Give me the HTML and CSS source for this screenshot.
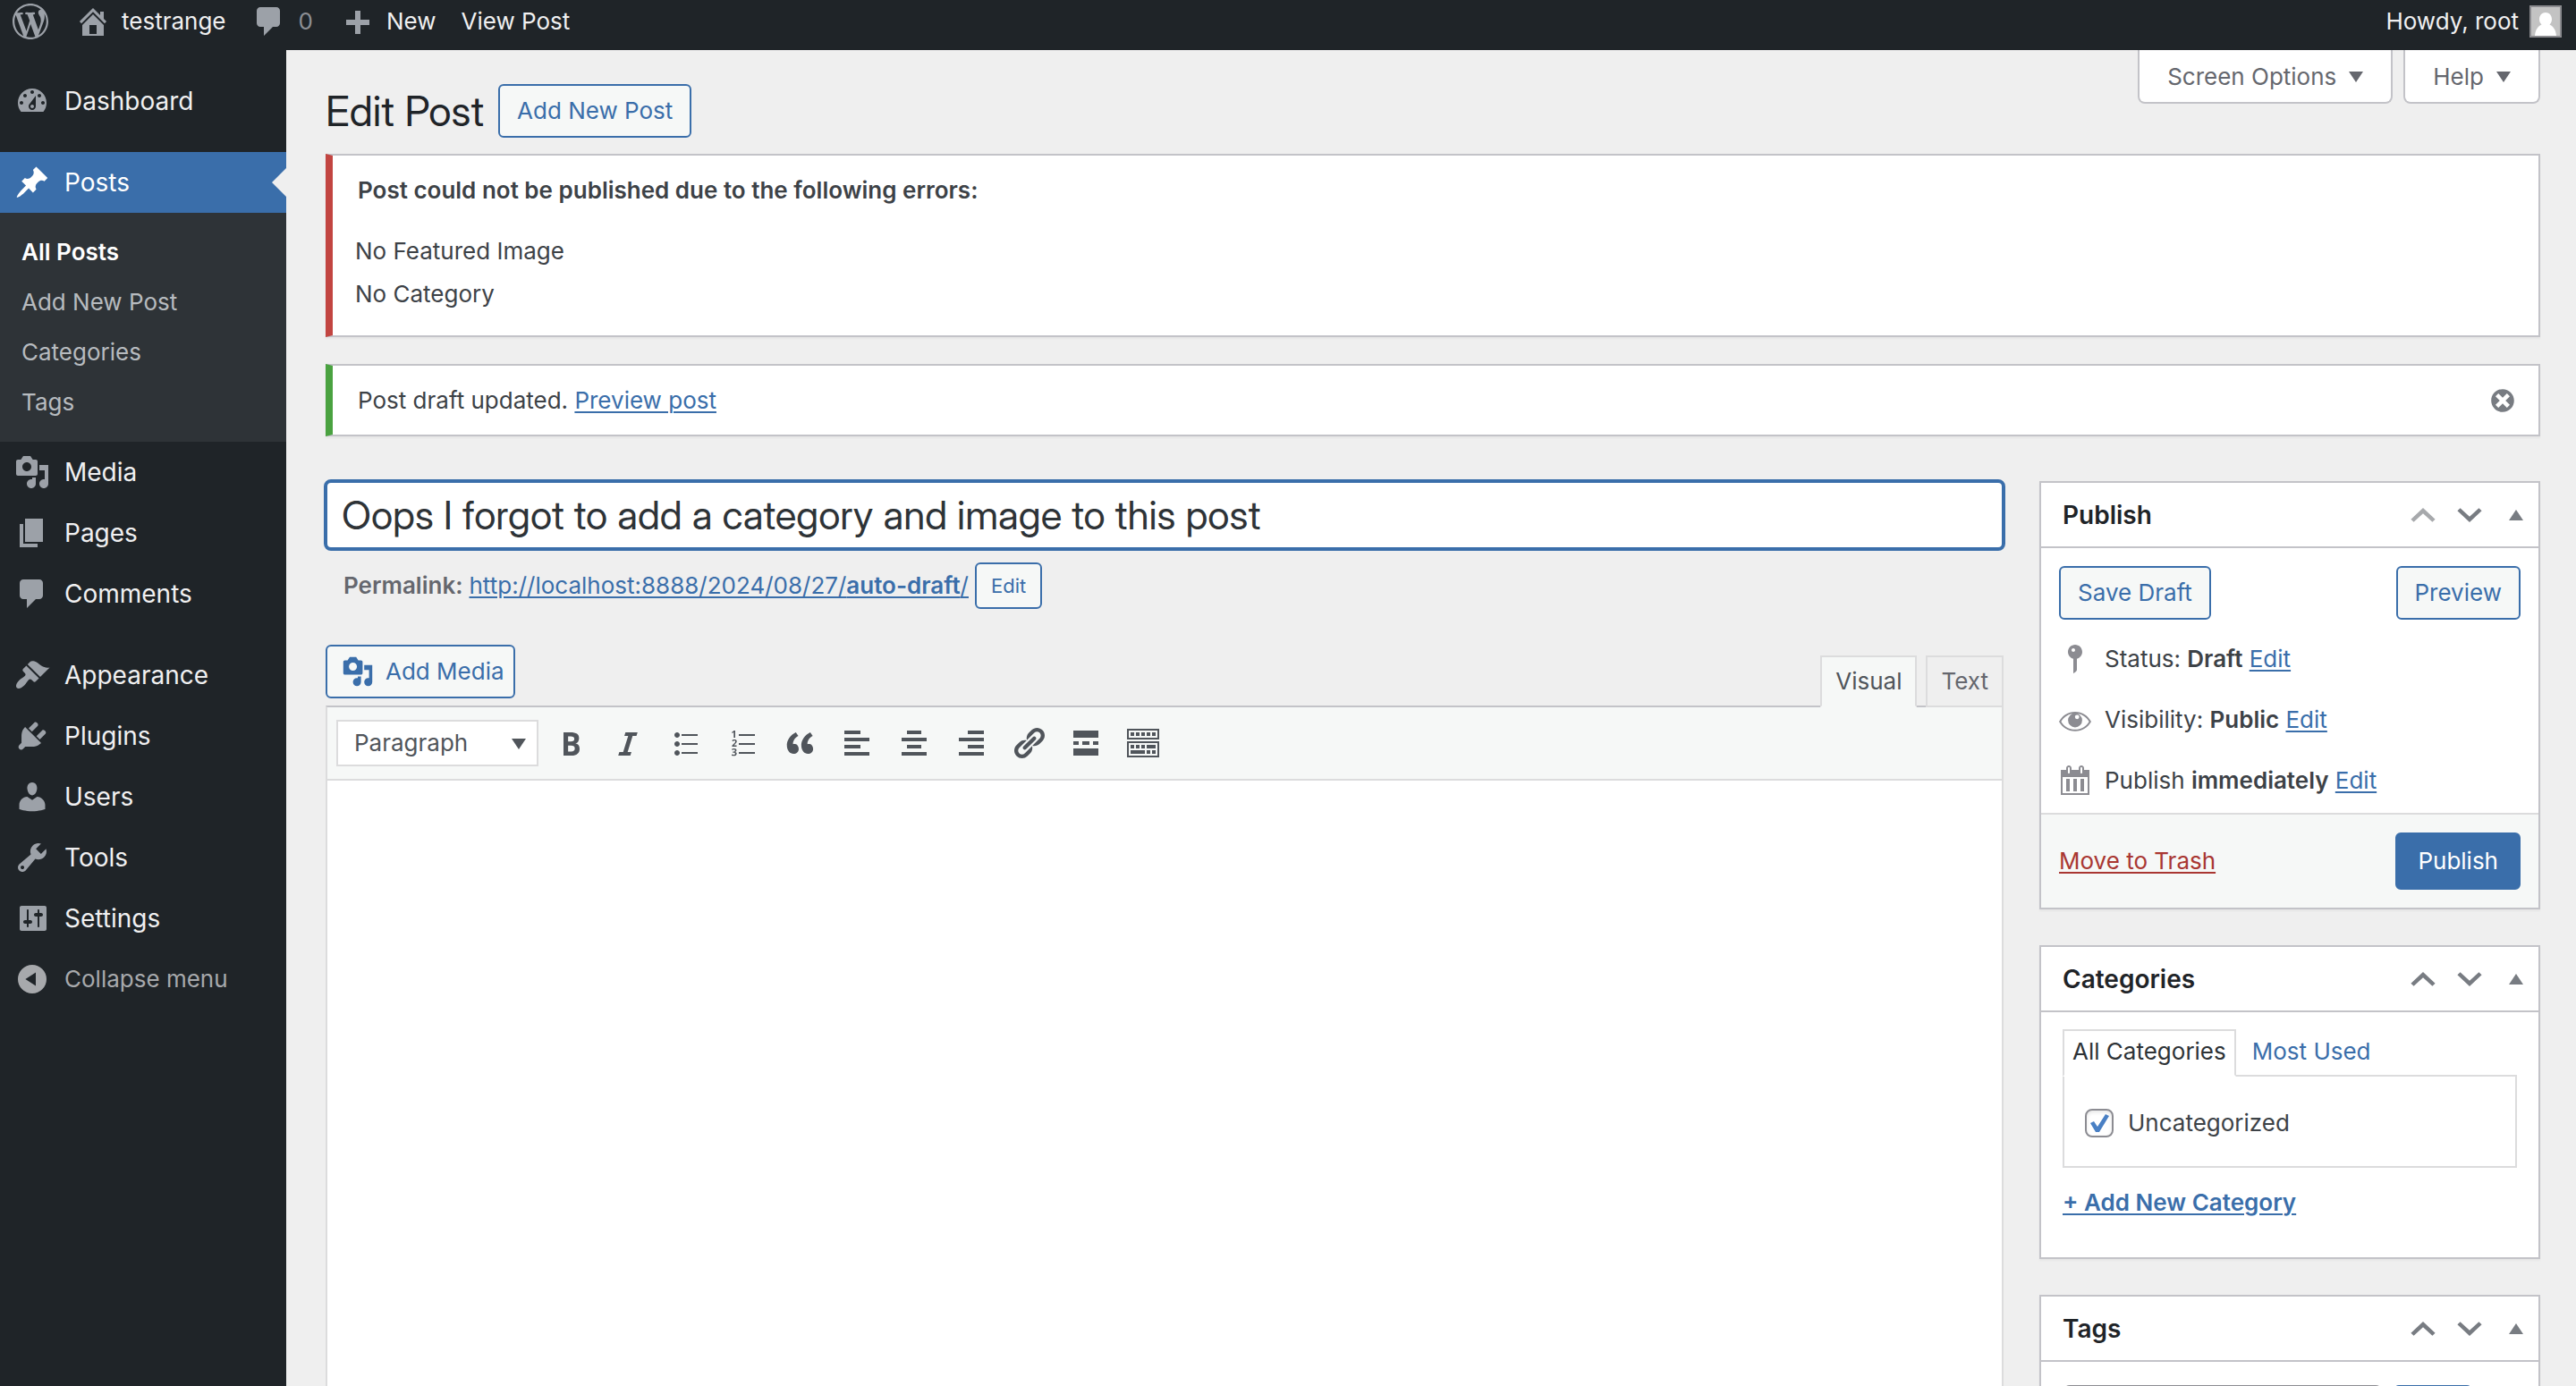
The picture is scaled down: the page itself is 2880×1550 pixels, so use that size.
FILE: index.html
```html
<!DOCTYPE html>
<html lang="en">
<head>
<meta charset="utf-8">
<meta name="viewport" content="width=device-width, initial-scale=1">
<title>Edit Post ‹ testrange — WordPress</title>
<link rel="stylesheet" href="styles.css">
</head>
<body>
<svg class="sprite" aria-hidden="true">
  <symbol id="i-wordpress" viewBox="0 0 20 20"><path d="M20 10c0-5.51-4.49-10-10-10C4.48 0 0 4.49 0 10c0 5.52 4.48 10 10 10 5.51 0 10-4.48 10-10zM7.78 15.37L4.37 6.22c.55-.02 1.17-.08 1.17-.08.5-.06.44-1.13-.06-1.11 0 0-1.45.11-2.37.11-.18 0-.37 0-.58-.01C4.12 2.69 6.87 1.11 10 1.11c2.33 0 4.45.87 6.05 2.34-.68-.11-1.65.39-1.65 1.58 0 .74.45 1.36.9 2.1.35.61.55 1.36.55 2.46 0 1.49-1.4 5-1.4 5l-3.03-8.37c.54-.02.82-.17.82-.17.5-.05.44-1.25-.06-1.22 0 0-1.44.12-2.38.12-.87 0-2.33-.12-2.33-.12-.5-.03-.56 1.2-.06 1.22l.92.08 1.26 3.41zM17.41 10c.24-.64.74-1.87.43-4.25.7 1.29 1.05 2.71 1.05 4.25 0 3.29-1.73 6.24-4.4 7.78.97-2.59 1.94-5.2 2.92-7.78zM6.1 18.09C3.12 16.65 1.11 13.53 1.11 10c0-1.3.23-2.48.72-3.59C3.25 10.3 4.67 14.2 6.1 18.09zm4.03-6.63l2.58 6.98c-.86.29-1.76.45-2.71.45-.79 0-1.57-.11-2.29-.33.81-2.38 1.62-4.74 2.42-7.1z"/></symbol>
  <symbol id="i-home" viewBox="0 0 20 20"><path fill-rule="evenodd" d="M16 8.5l1.53 1.53-1.06 1.06L10 4.6l-6.47 6.49-1.06-1.06L10 2.5l4 4v-2h2v4zm-6-2.46l6 5.99V18H4v-5.97zM12 17v-5H8v5h4z"/></symbol>
  <symbol id="i-comment" viewBox="0 0 20 20"><path d="M5 2h9c1.1 0 2 .9 2 2v7c0 1.1-.9 2-2 2h-2l-5 5v-5H5c-1.1 0-2-.9-2-2V4c0-1.1.9-2 2-2z"/></symbol>
  <symbol id="i-plus" viewBox="0 0 20 20"><path d="M8.5 4h3v5h5v3h-5v5h-3v-5h-5V9h5z"/></symbol>
  <symbol id="i-dashboard" viewBox="0 0 20 20"><path fill-rule="evenodd" d="M3.76 16h12.48c1.1-1.37 1.76-3.11 1.76-5 0-4.42-3.58-8-8-8s-8 3.58-8 8c0 1.89.66 3.63 1.76 5zM10 4c.55 0 1 .45 1 1s-.45 1-1 1-1-.45-1-1 .45-1 1-1zM6 6c.55 0 1 .45 1 1s-.45 1-1 1-1-.45-1-1 .45-1 1-1zm8 0c.55 0 1 .45 1 1s-.45 1-1 1-1-.45-1-1 .45-1 1-1zm-5.37 5.55L12 7v6c0 1.1-.9 2-2 2s-2-.9-2-2c0-.57.24-1.08.63-1.45zM4 10c.55 0 1 .45 1 1s-.45 1-1 1-1-.45-1-1 .45-1 1-1zm12 0c.55 0 1 .45 1 1s-.45 1-1 1-1-.45-1-1 .45-1 1-1zm-5 3c0-.55-.45-1-1-1s-1 .45-1 1 .45 1 1 1 1-.45 1-1z"/></symbol>
  <symbol id="i-pin" viewBox="0 0 20 20"><path d="M10.44 3.02l1.82-1.82 6.36 6.35-1.83 1.82c-1.05-.68-2.48-.57-3.41.36l-.75.75c-.92.93-1.04 2.35-.35 3.41l-1.83 1.82-2.41-2.41-2.8 2.79c-.42.42-3.38 2.71-3.8 2.29s1.86-3.39 2.28-3.81l2.79-2.79L4.1 9.36l1.83-1.82c1.05.69 2.48.57 3.4-.36l.75-.75c.93-.92 1.05-2.35.36-3.41z"/></symbol>
  <symbol id="i-media" viewBox="0 0 20 20"><path fill-rule="evenodd" d="M13 11V4c0-.55-.45-1-1-1h-1.67L9 1H5L3.67 3H2c-.55 0-1 .45-1 1v7c0 .55.45 1 1 1h10c.55 0 1-.45 1-1zM7 4.5c1.38 0 2.5 1.12 2.5 2.5S8.38 9.5 7 9.5 4.5 8.38 4.5 7 5.62 4.5 7 4.5zM14 6h5v10.5c0 1.38-1.12 2.5-2.5 2.5S14 17.88 14 16.5s1.12-2.5 2.5-2.5c.17 0 .34.02.5.05V9h-3V6zm-4 8.05V13h2v3.5c0 1.38-1.12 2.5-2.5 2.5S7 17.88 7 16.5 8.12 14 9.5 14c.17 0 .34.02.5.05z"/></symbol>
  <symbol id="i-page" viewBox="0 0 20 20"><path d="M6 15V2h10v13H6zm-1 1h8v2H3V5h2v11z"/></symbol>
  <symbol id="i-appearance" viewBox="0 0 20 20"><path d="M14.48 11.06L7.41 3.99l1.5-1.5c.5-.56 2.3-.47 3.51.32 1.21.8 1.43 1.28 2.91 2.1 1.18.64 2.45 1.26 4.45.85zm-.71.71L6.7 4.7 4.93 6.47c-.39.39-.39 1.02 0 1.41l1.06 1.06c.39.39.39 1.03 0 1.42-.6.6-1.43 1.11-2.21 1.69-.35.26-.7.53-1.01.84C1.43 14.23.4 16.08 1.4 17.07c.99 1 2.84-.03 4.18-1.36.31-.31.58-.66.85-1.02.57-.78 1.08-1.61 1.69-2.21.39-.39 1.02-.39 1.41 0l1.06 1.06c.39.39 1.02.39 1.41 0z"/></symbol>
  <symbol id="i-plugins" viewBox="0 0 20 20"><path d="M13.11 4.36L9.87 7.6 8 5.73l3.24-3.24c.35-.34 1.05-.2 1.56.32.52.51.66 1.21.31 1.55zm-8 1.77l.91-1.12 9.01 9.01-1.19.84c-.71.71-2.63 1.16-3.82 1.16H6.14L4.9 17.26c-.59.59-1.54.59-2.12 0-.59-.58-.59-1.53 0-2.12l1.24-1.24v-3.88c0-1.13.4-3.19 1.09-3.89zm7.26 3.97l3.24-3.24c.34-.35 1.04-.21 1.55.31.52.51.66 1.21.31 1.55l-3.24 3.25z"/></symbol>
  <symbol id="i-users" viewBox="0 0 20 20"><path d="M10 9.25c-2.27 0-2.73-3.44-2.73-3.44C7 4.02 7.82 2 9.97 2c2.16 0 2.98 2.02 2.71 3.81 0 0-.41 3.44-2.68 3.44zm0 2.57L12.72 10c2.39 0 4.52 2.33 4.52 4.53v2.49s-3.65 1.13-7.24 1.13c-3.65 0-7.24-1.13-7.24-1.13v-2.49c0-2.25 1.94-4.48 4.47-4.48z"/></symbol>
  <symbol id="i-tools" viewBox="0 0 20 20"><path fill-rule="evenodd" d="M16.68 9.77c-1.34 1.34-3.3 1.67-4.95.99l-5.41 6.52c-.99.99-2.59.99-3.58 0s-.99-2.59 0-3.57l6.52-5.42c-.68-1.65-.35-3.61.99-4.95 1.28-1.28 3.12-1.62 4.72-1.06l-2.89 2.89 2.82 2.82 2.86-2.87c.53 1.58.18 3.39-1.08 4.65zM3.81 16.21c.4.39 1.04.39 1.43 0 .4-.4.4-1.04 0-1.43-.39-.4-1.03-.4-1.43 0-.39.39-.39 1.03 0 1.43z"/></symbol>
  <symbol id="i-settings" viewBox="0 0 20 20"><path fill-rule="evenodd" d="M18 16V4c0-.55-.45-1-1-1H4c-.55 0-1 .45-1 1v12c0 .55.45 1 1 1h13c.55 0 1-.45 1-1zM8 11h1c.55 0 1 .45 1 1s-.45 1-1 1H8v1.5c0 .28-.22.5-.5.5s-.5-.22-.5-.5V13H6c-.55 0-1-.45-1-1s.45-1 1-1h1V5.5c0-.28.22-.5.5-.5s.5.22.5.5V11zm5-2h-1c-.55 0-1-.45-1-1s.45-1 1-1h1V5.5c0-.28.22-.5.5-.5s.5.22.5.5V7h1c.55 0 1 .45 1 1s-.45 1-1 1h-1v5.5c0 .28-.22.5-.5.5s-.5-.22-.5-.5V9z"/></symbol>
  <symbol id="i-collapse" viewBox="0 0 20 20"><path fill-rule="evenodd" d="M10 2a8 8 0 1 0 0 16 8 8 0 0 0 0-16zM6.2 10L12 6.2v7.6z"/></symbol>
  <symbol id="i-dismiss" viewBox="0 0 20 20"><path fill-rule="evenodd" d="M10 2c4.42 0 8 3.58 8 8s-3.58 8-8 8-8-3.58-8-8 3.58-8 8-8zm5 11l-3-3 3-3-2-2-3 3-3-3-2 2 3 3-3 3 2 2 3-3 3 3z"/></symbol>
  <symbol id="i-status" viewBox="0 0 20 20"><path fill-rule="evenodd" d="M14 6c0 1.86-1.28 3.41-3 3.86V16c0 1-2 2-2 2V9.86c-1.72-.45-3-2-3-3.86 0-2.21 1.79-4 4-4s4 1.79 4 4zM8 5c0 .55.45 1 1 1s1-.45 1-1-.45-1-1-1-1 .45-1 1z"/></symbol>
  <symbol id="i-eye" viewBox="0 0 20 20"><path fill-rule="evenodd" d="M10 5.500c4 0 7.200 2.200 9 5.500-1.800 3.300-5 5.400-9 5.400s-7.200-2.100-9-5.400c1.800-3.300 5-5.500 9-5.500zm0 1C6.600 6.500 3.800 8.200 2.200 11c1.600 2.800 4.400 4.400 7.800 4.400s6.200-1.600 7.800-4.400C16.200 8.200 13.400 6.500 10 6.500z"/><path fill-rule="evenodd" d="M10 6.300a3.900 3.900 0 1 1 0 7.900A3.900 3.900 0 0 1 10 6.300zm1.100.9a1.200 1.200 0 1 0 0 2.400 1.200 1.200 0 0 0 0-2.400z"/></symbol>
  <symbol id="i-calendar" viewBox="0 0 20 20"><path fill-rule="evenodd" d="M15 4h3v14H2V4h3V3c0-.83.67-1.5 1.5-1.500S8 2.170 8 3v1h4V3c0-.83.67-1.500 1.500-1.500S15 2.170 15 3v1zM6 3v2.500c0 .28.22.5.5.5s.5-.22.5-.5V3c0-.28-.22-.5-.5-.5S6 2.720 6 3zm7 0v2.500c0 .28.22.5.5.5s.5-.22.5-.5V3c0-.28-.22-.5-.5-.5s-.5.22-.5.5zm4 14V8H3v9h14zM7 16V9H5v7h2zm4 0V9H9v7h2zm4 0V9h-2v7h2z"/></symbol>
  <symbol id="i-up" viewBox="0 0 20 20"><path d="M10 5l8.500 8-2 1.900L10 8.900l-6.500 6-2-1.900z"/></symbol>
  <symbol id="i-down" viewBox="0 0 20 20"><path d="M10 15l8.500-8-2-1.900L10 11.100l-6.500-6-2 1.900z"/></symbol>
  <symbol id="i-tri-up" viewBox="0 0 16 12"><path d="M8 0l8 12H0z"/></symbol>
  <symbol id="i-tri-down" viewBox="0 0 16 12"><path d="M8 12L0 0h16z"/></symbol>
  <symbol id="i-bold" viewBox="0 0 20 20"><path fill-rule="evenodd" d="M6 4v13h4.540c1.370 0 2.460-.33 3.260-1 .8-.66 1.200-1.580 1.200-2.770 0-.84-.17-1.510-.51-2.010s-.9-.85-1.670-1.030v-.09c.57-.1 1.020-.4 1.360-.9s.51-1.130.51-1.910c0-1.140-.39-1.980-1.170-2.500C12.750 4.260 11.500 4 9.780 4H6zm2.570 5.150V6.260h1.360c.73 0 1.270.11 1.610.32.34.22.51.58.51 1.070 0 .54-.16.92-.47 1.150s-.82.35-1.510.35h-1.500zm0 2.190h1.600c1.440 0 2.160.53 2.160 1.610 0 .6-.17 1.050-.51 1.340s-.86.43-1.570.43H8.570v-3.380z"/></symbol>
  <symbol id="i-italic" viewBox="0 0 20 20"><path d="M14.780 6h-2.130l-2.800 9h2.120l-.62 2H4.600l.62-2h2.140l2.800-9H8.030l.62-2h6.750z"/></symbol>
  <symbol id="i-ul" viewBox="0 0 20 20"><path d="M5.500 7C4.670 7 4 6.330 4 5.500 4 4.680 4.670 4 5.500 4 6.320 4 7 4.680 7 5.500 7 6.330 6.320 7 5.500 7zM8 5h9v1H8V5zm-2.500 7c-.83 0-1.500-.67-1.500-1.500C4 9.680 4.670 9 5.500 9c.82 0 1.500.68 1.500 1.500 0 .83-.68 1.500-1.500 1.500zM8 10h9v1H8v-1zm-2.500 7c-.83 0-1.500-.67-1.500-1.500 0-.82.67-1.500 1.500-1.500.82 0 1.500.68 1.500 1.500 0 .83-.68 1.500-1.500 1.500zM8 15h9v1H8v-1z"/></symbol>
  <symbol id="i-ol" viewBox="0 0 20 20"><path d="M6 7V3h-.69L4.020 4.020l.4.51.46-.37c.06-.05.16-.14.3-.28l-.02.42V7H6zm2-2h9v1H8V5zm-1.230 6.950v-.7H5.250v-.04l.51-.48c.33-.31.57-.54.7-.71.14-.17.24-.33.3-.49.07-.16.1-.33.1-.51 0-.21-.05-.4-.16-.56-.1-.16-.25-.28-.44-.37s-.41-.14-.65-.14c-.19 0-.36.02-.51.06-.15.03-.29.09-.42.16-.12.07-.29.19-.48.36l.45.54c.16-.13.31-.23.45-.3.15-.07.3-.1.45-.1.14 0 .26.03.35.11s.13.2.13.36c0 .1-.02.2-.06.3s-.1.21-.19.33c-.09.11-.29.32-.58.62l-.99 1v.58h2.760zM8 10h9v1H8v-1zm-1.290 3.950c0-.3-.12-.54-.37-.71-.24-.17-.58-.26-1-.26-.52 0-.96.13-1.330.4l.4.6c.17-.11.32-.19.46-.23.14-.05.27-.07.41-.07.38 0 .58.15.58.46 0 .2-.07.35-.22.43s-.38.12-.7.12h-.31v.66h.31c.34 0 .59.04.75.12.15.08.23.22.23.41 0 .22-.07.37-.2.47-.14.1-.35.15-.63.15-.19 0-.38-.03-.57-.08s-.36-.12-.52-.2v.74c.34.15.74.22 1.180.22.53 0 .94-.11 1.220-.33.29-.22.43-.52.43-.92 0-.27-.09-.48-.26-.64s-.42-.26-.74-.3v-.02c.27-.06.49-.19.65-.37.15-.18.23-.39.23-.65zM8 15h9v1H8v-1z"/></symbol>
  <symbol id="i-quote" viewBox="0 0 20 20"><path d="M9.490 13.220c0-.74-.2-1.380-.61-1.900-.62-.78-1.830-.88-2.530-.72-.29-1.650 1.110-3.750 2.920-4.650L7.880 4c-2.730 1.300-5.420 4.280-4.960 8.050C3.210 14.430 4.590 16 6.540 16c.85 0 1.560-.25 2.120-.75s.83-1.180.83-2.030zm8.050 0c0-.74-.2-1.380-.61-1.900-.63-.78-1.830-.88-2.530-.72-.29-1.650 1.110-3.750 2.920-4.650L15.930 4c-2.730 1.300-5.410 4.280-4.950 8.050.29 2.380 1.660 3.950 3.610 3.950.85 0 1.560-.25 2.120-.75s.83-1.180.83-2.030z"/></symbol>
  <symbol id="i-left" viewBox="0 0 20 20"><path d="M12 5V3H3v2h9zm5 4V7H3v2h14zm-5 4v-2H3v2h9zm5 4v-2H3v2h14z"/></symbol>
  <symbol id="i-center" viewBox="0 0 20 20"><path d="M14 5V3H6v2h8zm3 4V7H3v2h14zm-3 4v-2H6v2h8zm3 4v-2H3v2h14z"/></symbol>
  <symbol id="i-right" viewBox="0 0 20 20"><path d="M17 5V3H8v2h9zm0 4V7H3v2h14zm0 4v-2H8v2h9zm0 4v-2H3v2h14z"/></symbol>
  <symbol id="i-link" viewBox="0 0 20 20"><path d="M17.740 2.760c1.680 1.690 1.680 4.410 0 6.100l-1.530 1.520c-1.120 1.120-2.700 1.470-4.140 1.090l2.620-2.610.76-.77.76-.76c.84-.84.84-2.200 0-3.040-.84-.85-2.200-.85-3.040 0l-.77.76-3.380 3.380c-.37-1.440-.02-3.020 1.100-4.140l1.520-1.530c1.690-1.680 4.420-1.680 6.100 0zM8.590 13.430l5.340-5.340c.42-.42.42-1.100 0-1.520-.44-.43-1.130-.39-1.530 0l-5.330 5.340c-.42.42-.42 1.100 0 1.520.44.43 1.130.39 1.520 0zm-.76 2.290l4.140-4.150c.38 1.440.03 3.020-1.090 4.140l-1.520 1.530c-1.690 1.680-4.410 1.680-6.100 0-1.680-1.680-1.680-4.420 0-6.100l1.530-1.520c1.120-1.120 2.700-1.470 4.140-1.100l-4.140 4.150c-.85.84-.85 2.200 0 3.050.84.84 2.200.84 3.040 0z"/></symbol>
  <symbol id="i-more" viewBox="0 0 20 20"><path d="M17 7V3H3v4h14zM6 11V9H3v2h3zm6 0V9H8v2h4zm5 0V9h-3v2h3zm0 6v-4H3v4h14z"/></symbol>
  <symbol id="i-sink" viewBox="0 0 20 20"><path fill-rule="evenodd" d="M19 2v6H1V2h18zm-1 5V3H2v4h16zM5 4v2H3V4h2zm3 0v2H6V4h2zm3 0v2H9V4h2zm3 0v2h-2V4h2zm3 0v2h-2V4h2zm2 5v9H1V9h18zm-1 8v-7H2v7h16zM5 11v2H3v-2h2zm3 0v2H6v-2h2zm3 0v2H9v-2h2zm6 0v2h-5v-2h5zm-6 3v2H3v-2h8zm3 0v2h-2v-2h2zm3 0v2h-2v-2h2z"/></symbol>
</svg>

<header class="adminbar">
  <nav class="adminbar-group" aria-label="Toolbar">
    <a class="bar-item bar-logo" href="#" aria-label="About WordPress"><svg class="icon"><use href="#i-wordpress"/></svg></a>
    <a class="bar-item bar-site" href="#"><svg class="icon"><use href="#i-home"/></svg><span>testrange</span></a>
    <a class="bar-item bar-comments" href="#"><svg class="icon"><use href="#i-comment"/></svg><span class="bar-count">0</span></a>
    <a class="bar-item bar-new" href="#"><svg class="icon"><use href="#i-plus"/></svg><span>New</span></a>
    <a class="bar-item bar-view" href="#">View Post</a>
  </nav>
  <a class="bar-item bar-account" href="#">Howdy, root
    <svg class="avatar" viewBox="0 0 36 36"><path fill="#8c8c90" d="M0 0h36v36H0z"/><path fill="#c3c3c3" d="M2 2h32v32H2z"/><path fill="#fff" d="M18 8c4 0 7 3 7 7.500 0 2.500-1 4.500-2.500 6 4 1.500 7 6 7.500 12.500H6c.5-6.500 3.500-11 7.500-12.500C12 20 11 18 11 15.500 11 11 14 8 18 8z"/></svg>
  </a>
</header>

<div class="shell">
  <nav class="menu" aria-label="Main menu">
    <a class="menu-item" href="#"><svg class="icon"><use href="#i-dashboard"/></svg>Dashboard</a>
    <div class="menu-gap"></div>
    <a class="menu-item menu-current" href="#"><svg class="icon"><use href="#i-pin"/></svg>Posts</a>
    <div class="submenu">
      <a class="submenu-current" href="#">All Posts</a>
      <a href="#">Add New Post</a>
      <a href="#">Categories</a>
      <a href="#">Tags</a>
    </div>
    <a class="menu-item" href="#"><svg class="icon"><use href="#i-media"/></svg>Media</a>
    <a class="menu-item" href="#"><svg class="icon"><use href="#i-page"/></svg>Pages</a>
    <a class="menu-item" href="#"><svg class="icon"><use href="#i-comment"/></svg>Comments</a>
    <div class="menu-gap"></div>
    <a class="menu-item" href="#"><svg class="icon"><use href="#i-appearance"/></svg>Appearance</a>
    <a class="menu-item" href="#"><svg class="icon"><use href="#i-plugins"/></svg>Plugins</a>
    <a class="menu-item" href="#"><svg class="icon"><use href="#i-users"/></svg>Users</a>
    <a class="menu-item" href="#"><svg class="icon"><use href="#i-tools"/></svg>Tools</a>
    <a class="menu-item" href="#"><svg class="icon"><use href="#i-settings"/></svg>Settings</a>
    <button class="menu-item menu-collapse" type="button"><svg class="icon"><use href="#i-collapse"/></svg>Collapse menu</button>
  </nav>

  <main class="content">
    <div class="page-head">
      <h1>Edit Post</h1>
      <a class="button" href="#">Add New Post</a>
      <div class="screen-links">
        <button type="button">Screen Options<svg class="tri"><use href="#i-tri-down"/></svg></button>
        <button type="button">Help<svg class="tri"><use href="#i-tri-down"/></svg></button>
      </div>
    </div>

    <section class="notice notice-error">
      <p><strong>Post could not be published due to the following errors:</strong></p>
      <ul>
        <li>No Featured Image</li>
        <li>No Category</li>
      </ul>
    </section>
    <section class="notice notice-success">
      <p>Post draft updated. <a href="#">Preview post</a></p>
      <button class="dismiss" type="button" aria-label="Dismiss this notice"><svg><use href="#i-dismiss"/></svg></button>
    </section>

    <div class="columns">
      <div class="primary">
        <input class="post-title" type="text" aria-label="Add title" value="Oops I forgot to add a category and image to this post">
        <div class="permalink">
          <strong>Permalink:</strong>
          <a href="#">http://localhost:8888/2024/08/27/<b>auto-draft</b>/</a>
          <button class="button button-small" type="button">Edit</button>
        </div>
        <div class="editor-tools">
          <button class="button button-media" type="button"><svg class="media-icon"><use href="#i-media"/></svg>Add Media</button>
          <div class="editor-tabs">
            <button class="tab-active" type="button">Visual</button>
            <button type="button">Text</button>
          </div>
        </div>
        <div class="editor">
          <div class="toolbar">
            <div class="format">
              <select aria-label="Paragraph format"><option>Paragraph</option></select>
              <svg class="tri"><use href="#i-tri-down"/></svg>
            </div>
            <button type="button" aria-label="Bold"><svg><use href="#i-bold"/></svg></button>
            <button type="button" aria-label="Italic"><svg><use href="#i-italic"/></svg></button>
            <button type="button" aria-label="Bulleted list"><svg><use href="#i-ul"/></svg></button>
            <button type="button" aria-label="Numbered list"><svg><use href="#i-ol"/></svg></button>
            <button type="button" aria-label="Blockquote"><svg><use href="#i-quote"/></svg></button>
            <button type="button" aria-label="Align left"><svg><use href="#i-left"/></svg></button>
            <button type="button" aria-label="Align center"><svg><use href="#i-center"/></svg></button>
            <button type="button" aria-label="Align right"><svg><use href="#i-right"/></svg></button>
            <button type="button" aria-label="Insert link"><svg><use href="#i-link"/></svg></button>
            <button type="button" aria-label="Insert Read More tag"><svg><use href="#i-more"/></svg></button>
            <button type="button" aria-label="Toolbar Toggle"><svg><use href="#i-sink"/></svg></button>
          </div>
          <textarea class="editor-body" aria-label="Post content"></textarea>
        </div>
      </div>

      <aside class="side">
        <section class="box">
          <div class="box-head">
            <h2>Publish</h2>
            <button class="box-off" type="button" aria-label="Move up"><svg><use href="#i-up"/></svg></button>
            <button type="button" aria-label="Move down"><svg><use href="#i-down"/></svg></button>
            <button type="button" aria-label="Toggle panel"><svg class="tri"><use href="#i-tri-up"/></svg></button>
          </div>
          <div class="publish-main">
            <div class="publish-row">
              <button class="button" type="button">Save Draft</button>
              <a class="button" href="#">Preview</a>
            </div>
            <p class="publish-line"><svg class="icon"><use href="#i-status"/></svg><span>Status: <strong>Draft</strong> <a href="#">Edit</a></span></p>
            <p class="publish-line"><svg class="icon"><use href="#i-eye"/></svg><span>Visibility: <strong>Public</strong> <a href="#">Edit</a></span></p>
            <p class="publish-line"><svg class="icon"><use href="#i-calendar"/></svg><span>Publish <strong>immediately</strong> <a href="#">Edit</a></span></p>
          </div>
          <div class="publish-foot">
            <a class="trash" href="#">Move to Trash</a>
            <button class="button button-primary" type="submit">Publish</button>
          </div>
        </section>

        <section class="box">
          <div class="box-head">
            <h2>Categories</h2>
            <button type="button" aria-label="Move up"><svg><use href="#i-up"/></svg></button>
            <button type="button" aria-label="Move down"><svg><use href="#i-down"/></svg></button>
            <button type="button" aria-label="Toggle panel"><svg class="tri"><use href="#i-tri-up"/></svg></button>
          </div>
          <div class="cats">
            <div class="cat-tabs">
              <a class="cat-tab-active" href="#">All Categories</a>
              <a href="#">Most Used</a>
            </div>
            <div class="cat-panel">
              <label><input type="checkbox" checked>Uncategorized</label>
            </div>
            <a class="cat-add" href="#">+ Add New Category</a>
          </div>
        </section>

        <section class="box">
          <div class="box-head">
            <h2>Tags</h2>
            <button type="button" aria-label="Move up"><svg><use href="#i-up"/></svg></button>
            <button type="button" aria-label="Move down"><svg><use href="#i-down"/></svg></button>
            <button type="button" aria-label="Toggle panel"><svg class="tri"><use href="#i-tri-up"/></svg></button>
          </div>
          <div class="tags">
            <input type="text" aria-label="Add New Tag">
            <button class="button" type="button" aria-label="Add"></button>
          </div>
        </section>
      </aside>
    </div>
  </main>
</div>
</body>
</html>
```
FILE: styles.css
```css
:root {
  --blue: #3a6eaa;
  --line: #c3c3c8;
  --line-light: #dcdcdd;
  --dark: #1f2428;
  --text: #3d4247;
  --pale: #f6f8f7;
  --muted: #65676e;
}

* { box-sizing: border-box; }

body {
  margin: 0;
  height: 100vh;
  display: flex;
  flex-direction: column;
  overflow: hidden;
  background: #efefef;
  color: var(--text);
  font: 26px/36px Inter, "Liberation Sans", sans-serif;
}

h1, h2, p, ul { margin: 0; padding: 0; }
ul { list-style: none; }
a { color: var(--blue); text-underline-offset: 3px; text-decoration-thickness: 2px; }
strong, b { font-weight: 600; }
svg { display: block; fill: currentColor; flex: none; }
button, input, select, textarea { font: inherit; color: inherit; margin: 0; border-radius: 0; }
button { padding: 0; border: 0; background: none; cursor: pointer; }

.sprite { position: absolute; width: 0; height: 0; }
.icon { width: 40px; height: 40px; }
.tri { width: 16px; height: 12px; }

/* Top toolbar */
.adminbar {
  flex: none;
  display: flex;
  justify-content: space-between;
  padding: 0 16px 8px 14px;
  background: var(--dark);
}
.adminbar-group { display: flex; }
.bar-item {
  display: flex;
  align-items: center;
  height: 48px;
  color: #f0f0f1;
  text-decoration: none;
}
.bar-item .icon { color: #9ca1a8; }
.bar-site { margin-left: 30px; gap: 12px; }
.bar-comments { margin-left: 28px; gap: 13px; }
.bar-count { color: #8c8f94; }
.bar-new { margin-left: 30px; gap: 12px; }
.bar-view { margin-left: 28px; }
.bar-account { gap: 12px; }
.avatar { width: 36px; height: 36px; }

.shell { flex: 1; min-height: 0; display: flex; }

/* Left menu */
.menu {
  flex: none;
  width: 320px;
  display: flex;
  flex-direction: column;
  padding-top: 23px;
  background: var(--dark);
}
.menu-item {
  position: relative;
  display: flex;
  align-items: center;
  gap: 16px;
  height: 68px;
  padding-left: 16px;
  color: #f0f0f1;
  font-size: 28px;
  text-decoration: none;
}
.menu-item .icon { color: #9ca1a8; }
.menu-gap { height: 23px; }
.menu-current, .menu-current .icon { background: var(--blue); color: #fff; }
.menu-current::after {
  content: "";
  position: absolute;
  right: 0;
  top: 18px;
  border: 16px solid transparent;
  border-left-width: 0;
  border-right-color: #efefef;
}
.submenu { padding: 16px 0; background: #2e3337; }
.submenu a {
  display: block;
  padding: 10px 24px;
  color: #b7bbbf;
  text-decoration: none;
}
.submenu .submenu-current { color: #fff; font-weight: 600; }
.menu-collapse, .menu-collapse .icon { color: #a7a9ac; }
.menu-collapse { font-size: 26px; }

/* Content area */
.content {
  flex: 1;
  min-width: 0;
  display: flex;
  flex-direction: column;
  padding: 0 40px 0 44px;
}
.page-head { display: flex; align-items: flex-start; height: 116px; }
.page-head h1 {
  margin: 38px 16px 0 0;
  color: #1f2428;
  font-family: "Inter Display", Inter, "Liberation Sans", sans-serif;
  font-size: 46px;
  font-variation-settings: "opsz" 32;
  font-weight: 400;
  line-height: 60px;
}
.page-head .button { margin-top: 38px; }
.screen-links { display: flex; gap: 12px; margin-left: auto; }
.screen-links button {
  display: flex;
  align-items: center;
  gap: 14px;
  height: 60px;
  padding: 2px 31px 0;
  border: 2px solid var(--line);
  border-top: 0;
  border-radius: 0 0 8px 8px;
  background: #fff;
  color: var(--muted);
}

.button {
  display: inline-flex;
  align-items: center;
  justify-content: center;
  height: 60px;
  padding: 0 19px;
  border: 2px solid var(--blue);
  border-radius: 6px;
  background: var(--pale);
  color: var(--blue);
  text-decoration: none;
}
.button-small { height: 52px; padding: 0 16px; font-size: 22px; }
.button-primary { height: 64px; padding: 0 23px; background: var(--blue); color: #fff; }

/* Notices */
.notice {
  flex: none;
  border: 2px solid var(--line);
  border-left-width: 8px;
  background: #fff;
  box-shadow: 0 2px 2px rgba(0, 0, 0, .04);
}
.notice-error { height: 205px; padding: 21px 25px; border-left-color: #c24541; }
.notice-error p { padding-left: 3px; margin-bottom: 26px; }
.notice-error li { line-height: 48px; }
.notice-success {
  display: flex;
  align-items: center;
  justify-content: space-between;
  height: 81px;
  margin-top: 30px;
  padding: 0 24px 0 28px;
  border-left-color: #4aa240;
}
.dismiss { color: #787c82; }
.dismiss svg { width: 32px; height: 32px; }

.columns { flex: 1; min-height: 0; display: flex; align-items: stretch; gap: 40px; padding-top: 48px; }
.primary { flex: 1; min-width: 0; display: flex; flex-direction: column; }

.post-title {
  flex: none;
  width: calc(100% + 4px);
  height: 80px;
  margin: 0 -2px;
  padding: 0 16px;
  border: 4px solid var(--blue);
  border-radius: 8px;
  background: #fff;
  color: #2e3337;
  font-family: "Inter Display", Inter, "Liberation Sans", sans-serif;
  font-size: 44px;
  font-variation-settings: "opsz" 32;
  outline: 0;
}
.permalink {
  display: flex;
  align-items: center;
  gap: 7px;
  height: 52px;
  margin: 13px 20px 0;
  color: var(--muted);
}
.editor-tools { display: flex; justify-content: space-between; align-items: flex-start; margin-top: 40px; }
.button-media { gap: 13px; padding: 0 10px 0 16px; }
.media-icon { width: 36px; height: 36px; }
.editor-tabs { display: flex; gap: 10px; margin-top: 12px; position: relative; z-index: 1; }
.editor-tabs button {
  height: 58px;
  padding: 0 15px;
  border: 2px solid var(--line-light);
  background: #efefef;
  color: var(--muted);
}
.editor-tabs .tab-active { border-bottom-color: var(--pale); background: var(--pale); color: #50555b; }

.editor {
  flex: 1;
  display: flex;
  flex-direction: column;
  margin-top: -2px;
  border: 2px solid var(--line-light);
  border-top-color: var(--line);
  border-bottom: 0;
}
.toolbar {
  display: flex;
  align-items: center;
  gap: 24px;
  height: 82px;
  padding: 0 10px;
  border-bottom: 2px solid var(--line-light);
  background: var(--pale);
  color: #50555b;
}
.toolbar button svg { width: 40px; height: 40px; }
.format { position: relative; width: 226px; margin-right: -8px; }
.format select {
  display: block;
  width: 100%;
  height: 52px;
  padding: 0 18px;
  border: 2px solid var(--line-light);
  background: #fff;
  appearance: none;
}
.format .tri { position: absolute; right: 14px; top: 21px; pointer-events: none; }
.editor-body { flex: 1; width: 100%; border: 0; background: #fff; resize: none; display: block; }

/* Side boxes */
.side { flex: none; width: 560px; display: flex; flex-direction: column; gap: 40px; padding-top: 2px; }
.box {
  flex: none;
  border: 2px solid var(--line);
  background: #fff;
  box-shadow: 0 2px 2px rgba(0, 0, 0, .04);
}
.box-head {
  display: flex;
  align-items: center;
  height: 73px;
  padding: 0 17px 0 24px;
  border-bottom: 2px solid var(--line);
  color: #787c82;
}
.box-head h2 { flex: 1; color: #1f2428; font-size: 28px; font-weight: 600; }
.box-head button { width: 52px; display: flex; justify-content: center; }
.box-head button:last-child { width: 16px; margin-left: 18px; }
.box-head button svg { width: 32px; height: 32px; }
.box-head button .tri { width: 16px; height: 12px; }
.box-head .box-off { color: #a7a9ac; }

.publish-main { padding: 20px 20px 2px; }
.publish-row { display: flex; justify-content: space-between; margin-bottom: 10px; }
.publish-line { display: flex; align-items: center; gap: 13px; height: 68px; margin-left: -2px; }
.publish-line .icon { color: #8c8c92; }
.publish-foot {
  display: flex;
  align-items: center;
  justify-content: space-between;
  height: 106px;
  padding: 0 20px;
  border-top: 2px solid var(--line-light);
  background: var(--pale);
}
.trash { color: #a93732; }

.cats { padding: 19px 24px 43px; }
.cat-tabs { display: flex; }
.cat-tabs a {
  height: 53px;
  margin-bottom: -2px;
  padding: 5px 16px;
  border: 2px solid transparent;
  text-decoration: none;
}
.cat-tabs .cat-tab-active {
  position: relative;
  padding: 5px 9px;
  border-color: var(--line-light);
  border-bottom-color: #fff;
  background: #fff;
  color: #2e3337;
}
.cat-panel { height: 104px; padding: 34px 23px; border: 2px solid var(--line-light); }
.cat-panel label { display: flex; align-items: center; gap: 16px; }
.cat-panel input {
  appearance: none;
  width: 32px;
  height: 32px;
  border: 2px solid #8c8c92;
  border-radius: 8px;
  background: #fff url("data:image/svg+xml,%3Csvg xmlns='http://www.w3.org/2000/svg' viewBox='0 0 28 28'%3E%3Cpath fill='%234a80c4' d='M4 14l4-2 4 6 9-14 4 2-11 18h-4z'/%3E%3C/svg%3E") center / 28px 28px no-repeat;
  box-shadow: inset 0 2px 4px rgba(0, 0, 0, .1);
}
.cat-add { display: inline-block; margin-top: 21px; font-weight: 600; }

.tags { display: flex; gap: 12px; padding: 26px 24px; }
.tags input { width: 358px; height: 60px; border: 2px solid #8c8c92; border-radius: 8px; background: #fff; }
.tags .button { width: 88px; }
```
